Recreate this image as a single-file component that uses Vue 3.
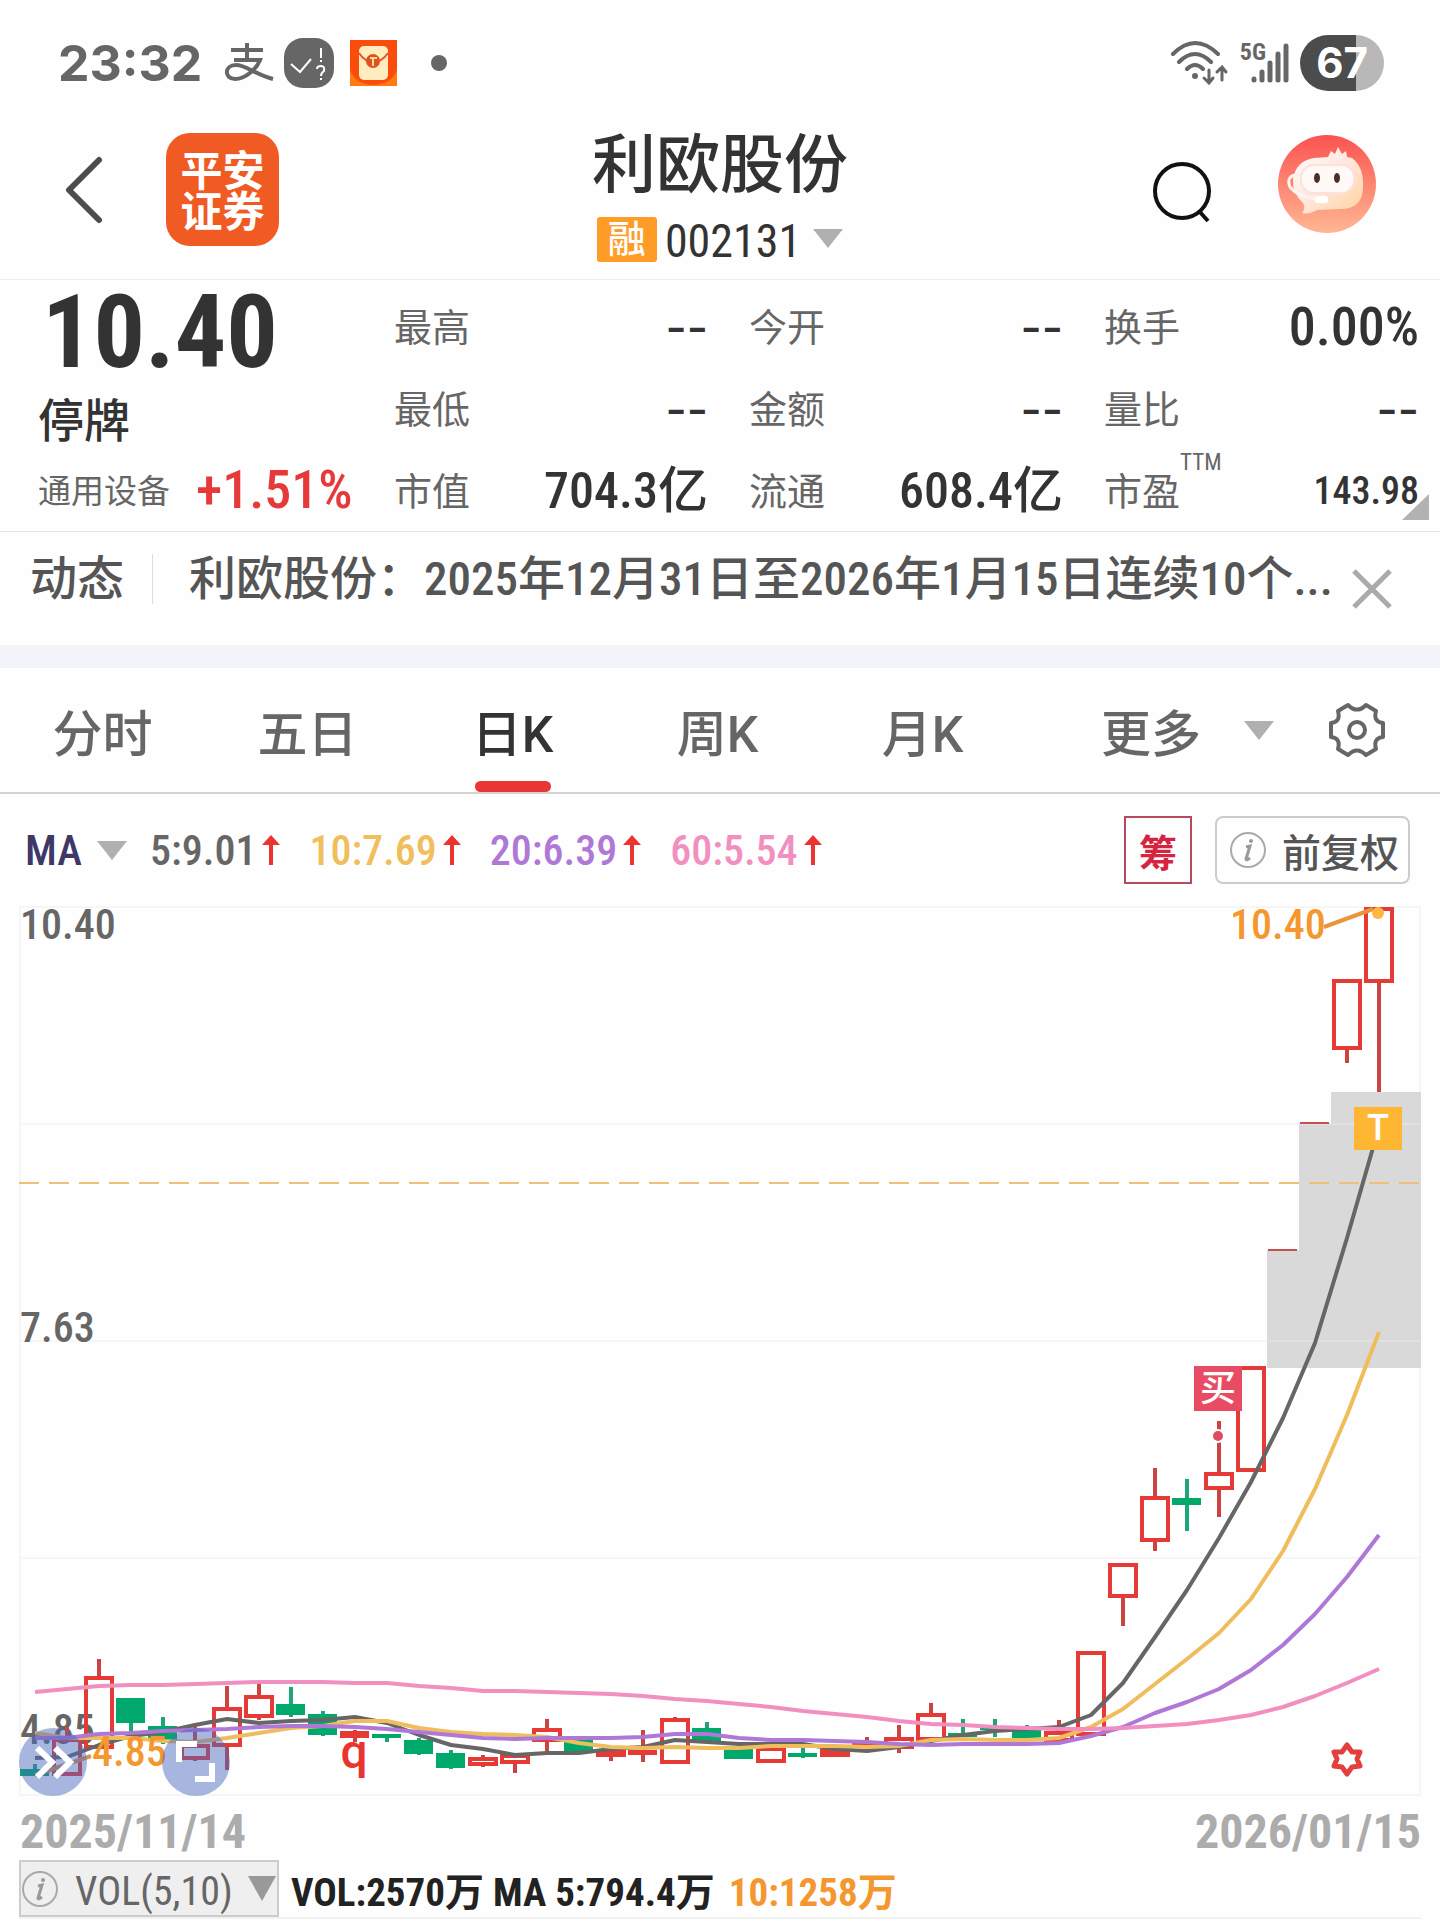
<script setup>
import { ref } from 'vue'

const tabs = ['分时', '五日', '日K', '周K', '月K']
const activeTab = ref('日K')
const indicator = ref('MA')
const volume = ref('VOL(5,10)')

const stats = [
  [['最高', '--'], ['最低', '--'], ['市值', '704.3亿']],
  [['今开', '--'], ['金额', '--'], ['流通', '608.4亿']],
  [['换手', '0.00%'], ['量比', '--'], ['市盈', '143.98', 'TTM']],
]

const averages = [
  { text: '5:9.01', tone: 'ma5' },
  { text: '10:7.69', tone: 'ma10' },
  { text: '20:6.39', tone: 'ma20' },
  { text: '60:5.54', tone: 'ma60' },
]

// One candle per trading day: [kind, wick top, body top, body bottom, wick bottom]
// u = hollow rise, s = solid rise, d = fall, l = limit-up line
const candles = [
  ['d', 1764, 1769, 1776, 1776], ['u', 1727, 1738, 1776, 1776], ['u', 1659, 1676, 1749, 1749],
  ['d', 1698, 1698, 1723, 1737], ['d', 1717, 1726, 1740, 1744], ['u', 1727, 1744, 1760, 1761],
  ['u', 1686, 1707, 1747, 1770], ['u', 1684, 1695, 1718, 1720], ['d', 1687, 1704, 1715, 1717],
  ['d', 1711, 1714, 1735, 1736], ['s', 1730, 1731, 1738, 1742], ['d', 1734, 1734, 1738, 1742],
  ['d', 1738, 1740, 1754, 1755], ['d', 1750, 1753, 1768, 1769], ['u', 1755, 1757, 1766, 1767],
  ['u', 1754, 1754, 1764, 1773], ['u', 1719, 1728, 1742, 1752], ['d', 1740, 1740, 1751, 1751],
  ['u', 1747, 1749, 1757, 1761], ['s', 1730, 1750, 1755, 1762], ['u', 1717, 1718, 1764, 1764],
  ['d', 1722, 1728, 1741, 1741], ['d', 1749, 1749, 1759, 1759], ['u', 1747, 1747, 1763, 1763],
  ['d', 1748, 1753, 1757, 1758], ['u', 1747, 1749, 1757, 1757], ['s', 1737, 1743, 1748, 1748],
  ['u', 1725, 1737, 1749, 1753], ['u', 1703, 1713, 1741, 1741], ['d', 1719, 1733, 1737, 1737],
  ['d', 1719, 1727, 1730, 1737], ['d', 1725, 1729, 1739, 1739], ['u', 1720, 1731, 1742, 1742],
  ['u', 1651, 1651, 1736, 1736], ['u', 1563, 1563, 1598, 1626], ['u', 1468, 1496, 1542, 1551],
  ['d', 1479, 1498, 1505, 1531], ['u', 1421, 1472, 1490, 1517], ['u', 1366, 1366, 1472, 1472],
  ['l', 1250, 1250, 1250, 1250], ['l', 1123, 1123, 1123, 1123], ['u', 979, 979, 1050, 1063],
  ['u', 907, 907, 983, 1092],
].map(([kind, high, top, bottom, low], i) => ({ kind, high, top, bottom, low, x: 35 + i * 32 }))

const series = {
  ma5: [1758, 1757, 1745, 1736, 1732, 1725, 1719, 1723, 1721, 1720, 1717, 1723, 1735, 1745, 1749, 1755, 1753, 1753, 1749, 1747, 1740, 1742, 1744, 1744, 1744, 1749, 1751, 1747, 1741, 1735, 1731, 1729, 1727, 1715, 1683, 1637, 1590, 1538, 1482, 1418, 1343, 1238, 1127],
  ma10: [1733, 1738, 1738, 1738, 1741, 1742, 1738, 1733, 1728, 1726, 1721, 1721, 1728, 1732, 1734, 1735, 1737, 1743, 1747, 1748, 1747, 1748, 1748, 1746, 1746, 1746, 1747, 1746, 1740, 1739, 1740, 1740, 1738, 1727, 1709, 1684, 1659, 1633, 1599, 1551, 1489, 1415, 1332],
  ma20: [1738, 1738, 1734, 1733, 1731, 1730, 1729, 1727, 1726, 1726, 1727, 1729, 1732, 1735, 1738, 1739, 1738, 1738, 1738, 1737, 1734, 1734, 1738, 1740, 1740, 1741, 1742, 1744, 1745, 1744, 1744, 1744, 1743, 1736, 1727, 1713, 1702, 1689, 1670, 1645, 1614, 1577, 1535],
  ma60: [1692, 1689, 1686, 1685, 1685, 1684, 1683, 1682, 1682, 1682, 1683, 1683, 1686, 1688, 1691, 1691, 1692, 1693, 1694, 1696, 1699, 1701, 1704, 1707, 1711, 1714, 1717, 1721, 1724, 1725, 1727, 1728, 1729, 1729, 1728, 1726, 1724, 1720, 1715, 1707, 1696, 1683, 1669],
}
const lines = ['ma5', 'ma10', 'ma20', 'ma60'].map((name) => ({
  name,
  points: series[name].map((y, i) => `${35 + i * 32},${y}`).join(' '),
}))
</script>

<template>
  <main class="screen">
    <div class="status">
      <time class="clock">23:32</time>
      <svg class="pay" width="50" height="40" viewBox="0 0 50 40" aria-hidden="true">
        <path d="M7 7H39M23 0V17M10 17H36C33 25 22 36 11 36C0 36 0 22 12 22C22 22 32 32 49 36" />
      </svg>
      <svg width="50" height="50" viewBox="0 0 50 50" aria-hidden="true">
        <rect width="50" height="50" rx="19" fill="#666" />
        <path d="M7 26L16 34L27 21" fill="none" stroke="#fff" stroke-width="2" />
        <path d="M37 10V20M37 22V24M33 31Q33 28 37 28Q41 28 40 33Q37 35 37 38M37 40V42" fill="none" stroke="#fff" stroke-width="2" />
      </svg>
      <svg width="47" height="46" viewBox="0 0 47 46" aria-hidden="true">
        <rect width="47" height="46" fill="#fb4c0c" />
        <path d="M0 30Q5 44 23 45Q42 44 47 30V46H0Z" fill="#ff7a12" />
        <rect x="9" y="6" width="29" height="34" rx="5" fill="#ffedbf" />
        <path d="M9 13Q15 22 23 22Q32 22 38 13" fill="none" stroke="#e0582a" stroke-width="2" />
        <circle cx="23" cy="21" r="7" fill="#e2511d" />
        <path d="M20 18H27M23 18V26" stroke="#ffdf9d" stroke-width="2" />
      </svg>
      <span class="dot"></span>
      <span class="spacer"></span>
      <svg width="60" height="46" viewBox="0 0 60 46" fill="none" stroke="#666" stroke-width="4" stroke-linecap="round" aria-hidden="true">
        <path d="M3 14Q25 -8 48 14M9 22Q25 6 41 22M17 29Q25 21 33 29" />
        <circle cx="25" cy="36" r="2" fill="#666" stroke-width="2" />
        <path d="M39 30V43M34 38L39 43L43 38M52 40V27M47 32L52 27L56 32" stroke-width="3" />
      </svg>
      <div class="signal">
        <span>5G</span>
        <svg width="40" height="42" viewBox="0 0 40 42" stroke="#666" stroke-width="5" stroke-linecap="round" aria-hidden="true">
          <path d="M4 37V38M12 30V38M20 21V38M28 12V38M36 4V38" />
        </svg>
      </div>
      <span class="battery">67</span>
    </div>

    <header class="head">
      <div class="side">
        <button class="back" aria-label="返回">
          <svg width="38" height="68" viewBox="0 0 38 68"><path d="M34 4L4 34L34 64" /></svg>
        </button>
        <a class="logo" href="#"><span>平安</span><span>证券</span></a>
      </div>
      <div class="name">
        <h1>利欧股份</h1>
        <button class="code">
          <span class="badge">融</span>002131
          <svg width="30" height="19" viewBox="0 0 30 19"><path d="M0 0H30L15 19Z" fill="#b0b0b0" /></svg>
        </button>
      </div>
      <div class="side end">
        <button aria-label="搜索">
          <svg width="60" height="66" viewBox="0 0 60 66" fill="none" stroke="#111" stroke-width="4">
            <circle cx="30" cy="34" r="27" /><path d="M47 54L56 64" />
          </svg>
        </button>
        <button class="avatar" aria-label="智能客服">
          <svg width="99" height="99" viewBox="0 0 99 99">
            <defs>
              <linearGradient id="sky" x1="0" y1="0" x2="0" y2="1"><stop offset="0" stop-color="#fb5350" /><stop offset="1" stop-color="#ffb794" /></linearGradient>
              <linearGradient id="skin" x1="0" y1="0" x2="1" y2="1"><stop offset="0" stop-color="#fff" /><stop offset=".5" stop-color="#ffe6de" /><stop offset="1" stop-color="#ffd39a" /></linearGradient>
            </defs>
            <circle cx="49" cy="49" r="49" fill="url(#sky)" />
            <path d="M50 22L53 16L57 19L60 12L64 19L68 16L69 22L74 23Q86 32 85 52Q85 74 62 74L39 75Q30 80 24 78Q28 73 25 68Q14 58 15 44Q18 26 36 23Z" fill="url(#skin)" />
            <rect x="23" y="30" width="53" height="28" rx="13" fill="#fffaf8" stroke="#ffe1db" stroke-width="2" />
            <ellipse cx="39" cy="43" rx="3" ry="5" fill="#4a3029" /><ellipse cx="59" cy="43" rx="3" ry="5" fill="#4a3029" />
            <path d="M17 40Q8 42 12 52Q20 62 40 64" fill="none" stroke="#fff3ef" stroke-width="3" />
            <rect x="37" y="61" width="13" height="7" rx="3" fill="#fff" />
          </svg>
        </button>
      </div>
    </header>

    <section class="quote">
      <div class="last">
        <strong class="price">10.40</strong>
        <span class="halt">停牌</span>
        <a class="sector" href="#"><span>通用设备</span><b>+1.51%</b></a>
      </div>
      <dl v-for="(column, c) in stats" :key="c">
        <div v-for="[label, value, note] in column" :key="label">
          <dt>{{ label }}<sup v-if="note">{{ note }}</sup></dt>
          <dd :class="{ small: note, none: value === '--', rate: value.endsWith('%') }">{{ value }}</dd>
        </div>
      </dl>
      <svg class="corner" width="27" height="26" viewBox="0 0 27 26" aria-hidden="true"><path d="M27 0V26H0Z" fill="#b2b2b2" /></svg>
    </section>

    <section class="news">
      <span class="kind">动态</span>
      <a href="#">利欧股份：2025年12月31日至2026年1月15日连续10个...</a>
      <button aria-label="关闭">
        <svg width="40" height="40" viewBox="0 0 40 40"><path d="M2 2L38 38M38 2L2 38" stroke="#aaa" stroke-width="5" /></svg>
      </button>
    </section>

    <nav class="tabs">
      <button v-for="tab in tabs" :key="tab" class="tab" :class="{ on: tab === activeTab }" @click="activeTab = tab">{{ tab }}</button>
      <button class="tab more">
        更多
        <svg width="30" height="19" viewBox="0 0 30 19"><path d="M0 0H30L15 19Z" fill="#b0b0b0" /></svg>
      </button>
      <button class="gear" aria-label="设置">
        <svg width="56" height="56" viewBox="-28 -28 56 56" fill="none" stroke="#666" stroke-width="4" stroke-linejoin="round">
          <path d="M-9 -25Q0 -16 9 -25L19 -19Q16 -8 26 -7V7Q16 8 19 19L9 25Q0 16 -9 25L-19 19Q-16 8 -26 7V-7Q-16 -8 -19 -19Z" />
          <circle r="8" />
        </svg>
      </button>
    </nav>

    <section class="averages">
      <label class="pick">
        <select v-model="indicator" aria-label="主图指标"><option>MA</option></select>
        <svg width="30" height="19" viewBox="0 0 30 19"><path d="M0 0H30L15 19Z" fill="#b0b0b0" /></svg>
      </label>
      <span v-for="item in averages" :key="item.tone" class="average" :class="item.tone">
        {{ item.text }}
        <svg width="18" height="30" viewBox="0 0 18 30"><path d="M9 0L18 10H11V30H7V10H0Z" fill="#eb3330" /></svg>
      </span>
      <span class="spacer"></span>
      <button class="chips">筹</button>
      <button class="adjust">
        <svg width="38" height="38" viewBox="0 0 38 38" aria-hidden="true">
          <circle cx="19" cy="19" r="17" fill="none" stroke="#aaa" stroke-width="2" />
          <path d="M17 16L21 15L17 28Q17 30 21 27" fill="none" stroke="#999" stroke-width="3" /><circle cx="22" cy="10" r="2" fill="#999" />
        </svg>
        前复权
      </button>
    </section>

    <section class="chart">
      <svg class="plot" viewBox="0 894 1440 910" role="img" aria-label="日K线图">
        <path class="grid" d="M20 907H1420V1795H20ZM20 1124H1420M20 1341H1420M20 1558H1420" />
        <path d="M1267 1368V1250H1299V1123H1331V1092H1421V1368Z" fill="#d9d9d9" />
        <path d="M1299 1124H1420M1267 1341H1420" stroke="#e1e1e1" stroke-width="2" />
        <path d="M19 1183H1420" stroke="#f0c07a" stroke-width="2" stroke-dasharray="20 10" />
        <text class="axis" x="20" y="939">10.40</text>
        <text class="axis" x="20" y="1342">7.63</text>
        <text class="axis" x="20" y="1744">4.85</text>
        <g v-for="c in candles" :key="c.x" :class="c.kind">
          <path v-if="c.kind === 'l'" :d="`M${c.x - 15} ${c.top}H${c.x + 14}`" stroke="#c7504d" stroke-width="2" />
          <template v-else>
            <path class="wick" :d="`M${c.x} ${c.high}V${c.top}M${c.x} ${c.bottom}V${c.low}`" />
            <rect v-if="c.kind === 'u'" :x="c.x - 13" :y="c.top + 2" width="26" :height="c.bottom - c.top - 4" />
            <rect v-else :x="c.x - 15" :y="c.top" width="29" :height="c.bottom - c.top" />
          </template>
        </g>
        <polyline v-for="line in lines" :key="line.name" class="line" :class="line.name" :points="line.points" />
        <path d="M1324 927L1373 909" stroke="#ea9638" stroke-width="4" />
        <circle cx="1378" cy="913" r="6" fill="#ffb743" />
        <text class="mark" x="1230" y="939">10.40</text>
        <path d="M35 1775L91 1756" stroke="#d99352" stroke-width="4" />
        <text class="mark" x="92" y="1766">4.85</text>
        <rect x="1354" y="1107" width="48" height="43" fill="#ffb733" />
        <text class="flag wide" x="1378" y="1140">T</text>
        <rect x="1194" y="1366" width="48" height="45" fill="#e84c64" />
        <text class="flag" x="1218" y="1401">买</text>
        <circle cx="1218" cy="1436" r="6" fill="#dd4c62" stroke="#fff" stroke-width="2" />
        <text class="event" x="354" y="1768">q</text>
        <path d="M1347 1745L1352 1752L1360 1752L1357 1759L1360 1766L1352 1767L1347 1774L1342 1767L1334 1766L1337 1759L1334 1752L1342 1752Z" fill="none" stroke="#e33f3d" stroke-width="5" stroke-linejoin="round" />
      </svg>
      <div class="tools">
        <button aria-label="展开">
          <svg width="68" height="68" viewBox="0 0 68 68"><path d="M18 20L33 34L18 49M36 20L51 34L36 49" fill="none" stroke="#fff" stroke-width="6" /></svg>
        </button>
        <button aria-label="全屏">
          <svg width="68" height="68" viewBox="0 0 68 68"><path d="M17 34V16H35M50 35V51H33" fill="none" stroke="#fff" stroke-width="6" /></svg>
        </button>
      </div>
    </section>

    <div class="dates"><time>2025/11/14</time><time>2026/01/15</time></div>

    <section class="volume">
      <label class="volpick">
        <svg width="38" height="38" viewBox="0 0 38 38" aria-hidden="true">
          <circle cx="19" cy="19" r="17" fill="none" stroke="#aaa" stroke-width="2" />
          <path d="M17 16L21 15L17 28Q17 30 21 27" fill="none" stroke="#999" stroke-width="3" /><circle cx="22" cy="10" r="2" fill="#999" />
        </svg>
        <select v-model="volume" aria-label="副图指标"><option>VOL(5,10)</option></select>
        <svg width="28" height="25" viewBox="0 0 28 25"><path d="M0 0H28L14 25Z" fill="#999" /></svg>
      </label>
      <span>VOL:2570万 MA 5:794.4万</span>
      <span class="ten">10:1258万</span>
    </section>
  </main>
</template>

<style>
body { margin: 0; background: #fefefe; }
</style>

<style scoped>
.screen { font-family: "Roboto Condensed", "Noto Sans CJK SC", sans-serif; color: #333; background: #fefefe; overflow: hidden; }
button, select { font: inherit; color: inherit; background: none; border: 0; padding: 0; margin: 0; appearance: none; }
button { display: flex; align-items: center; cursor: pointer; }
a { color: inherit; text-decoration: none; }
svg { display: block; flex: none; }
.spacer { flex: 1; }

.status { display: flex; align-items: center; height: 94px; padding: 16px 56px 0 58px; color: #666; }
.clock { font: 700 50px/60px Inter, sans-serif; margin-right: 22px; }
.pay { fill: none; stroke: #666; stroke-width: 4; margin-right: 10px; }
.status > svg + svg { margin-right: 16px; }
.dot { width: 16px; height: 16px; border-radius: 50%; background: #666; margin-left: 18px; }
.signal { display: flex; margin: 0 10px 0 10px; font: 700 24px/28px "Roboto Condensed", sans-serif; }
.signal span { margin: -4px -16px 0 0; }
.battery { width: 84px; height: 56px; border-radius: 28px; background: linear-gradient(90deg, #4c4c4c 67%, #b8b8b8 67%); color: #fff; font: 700 42px/56px Inter, sans-serif; text-align: center; }

.head { display: grid; grid-template-columns: 1fr auto 1fr; border-bottom: 1px solid #ececec; height: 169px; }
.side { display: flex; align-items: center; padding: 0 63px 10px 65px; gap: 63px; }
.end { justify-content: flex-end; gap: 66px; }
.back path { fill: none; stroke: #4c4c4c; stroke-width: 6; stroke-linecap: round; stroke-linejoin: round; }
.logo { display: flex; flex-direction: column; width: 113px; height: 99px; padding: 14px 0 0; border-radius: 24px; background: #f05a23; color: #fff; font: 700 42px/41px "Noto Sans CJK SC", sans-serif; text-align: center; }
.avatar { margin-top: -10px; }
.name { display: flex; flex-direction: column; align-items: center; padding-top: 24px; }
h1 { margin: 0; font-size: 64px; line-height: 64px; font-weight: 500; }
.code { height: 56px; margin-top: 15px; font-size: 46px; gap: 8px; }
.code svg { margin: 0 0 6px 4px; }
.badge { width: 60px; height: 45px; margin-bottom: 4px; border-radius: 3px; background: #ff9c27; color: #fff; font-size: 38px; font-weight: 500; line-height: 44px; }

.quote { position: relative; display: grid; grid-template-columns: 315fr 314fr 314fr 315fr; column-gap: 41px; padding: 0 21px 0 38px; height: 251px; border-bottom: 1px solid #e6e6e6; white-space: nowrap; }
.last { display: flex; flex-direction: column; }
.price { padding-left: 4px; font-size: 102px; line-height: 104px; }
.halt { font-size: 46px; line-height: 74px; font-weight: 500; }
.sector { display: flex; align-items: center; gap: 26px; font-size: 33px; line-height: 60px; color: #666; }
.sector span { padding-top: 4px; }
.sector b { font-size: 54px; font-weight: 500; color: #e63a3a; }
dl { margin: 6px 0 0; }
dl div { display: flex; justify-content: space-between; align-items: center; height: 82px; }
dt { position: relative; padding-bottom: 6px; font-size: 38px; color: #666; font-weight: 400; }
dt sup { position: absolute; left: 100%; top: -12px; font-size: 23px; line-height: 28px; }
dd { margin: 0; font-size: 50px; line-height: 60px; font-weight: 500; }
dd.small { font-size: 38px; font-weight: 500; }
dd.rate { font-size: 54px; }
dd.none { font-family: Inter, sans-serif; font-size: 46px; }
.corner { position: absolute; right: 11px; bottom: 11px; }

.news { display: flex; align-items: center; height: 93px; padding: 0 48px 20px 30px; border-bottom: 23px solid #f2f4f9; font-size: 47px; font-weight: 500; color: #555; white-space: nowrap; }
.kind { padding-right: 28px; line-height: 50px; border-right: 1px solid #ddd; }
.news a { flex: 1; padding-left: 36px; line-height: 60px; }
.news button { margin-top: 20px; }

.tabs { display: grid; grid-template-columns: repeat(5, minmax(0, 205fr)) minmax(0, 272fr) minmax(0, 143fr); height: 124px; border-bottom: 2px solid #d2d4d4; font-family: Roboto, "Noto Sans CJK SC", sans-serif; font-size: 50px; font-weight: 500; color: #666; }
.tab { position: relative; justify-content: center; }
.tab.on { color: #333; }
.tab.on::after { content: ""; position: absolute; bottom: 0; left: 50%; width: 76px; margin-left: -38px; height: 11px; border-radius: 6px; background: #e93534; }
.more { justify-content: flex-start; padding-left: 76px; gap: 43px; }
.gear { padding-left: 32px; }

.averages { display: flex; align-items: center; height: 88px; padding: 12px 30px 0 25px; font-size: 42px; font-weight: 500; }
.pick { display: flex; align-items: center; gap: 15px; color: #3d3868; margin-right: 23px; }
.average { display: flex; align-items: center; gap: 6px; margin-right: 29px; }
.average.ma5 { color: #666; }
.average.ma10 { color: #f0be5a; }
.average.ma20 { color: #af78d7; }
.average.ma60 { color: #f08fc0; }
.chips { width: 68px; height: 68px; justify-content: center; border: 2px solid #b84a60; color: #d42440; font-size: 38px; font-weight: 700; }
.adjust { height: 68px; margin-left: 23px; padding: 0 9px 0 12px; gap: 15px; border: 2px solid #ccc; border-radius: 8px; color: #555; font-size: 39px; }

.chart { position: relative; }
.plot { width: 100%; height: auto; }
.grid { fill: none; stroke: #f6f6f6; stroke-width: 2; }
.axis { font-size: 42px; font-weight: 500; fill: #666; }
.mark { font-size: 42px; font-weight: 500; fill: #f5972f; }
.flag { font-size: 36px; font-weight: 500; fill: #fff; text-anchor: middle; }
.wide { font-family: Roboto, sans-serif; }
.event { font: 500 48px Roboto, sans-serif; fill: #eb3330; text-anchor: middle; }
.u rect { fill: none; stroke: #e63a37; stroke-width: 4; }
.s rect { fill: #e63a37; }
.d rect { fill: #00a86b; }
.u .wick, .s .wick { stroke: #cc4442; stroke-width: 4; }
.d .wick { stroke: #1ca577; stroke-width: 4; }
.line { fill: none; stroke-width: 4; stroke-linejoin: round; }
.line.ma5 { stroke: #666; }
.line.ma10 { stroke: #efbd5c; }
.line.ma20 { stroke: #af78d7; }
.line.ma60 { stroke: #f08fc0; }
.tools { position: absolute; left: 19px; bottom: 8px; display: flex; gap: 75px; }
.tools button { border-radius: 50%; background: rgba(73, 105, 190, 0.48); }

.dates { display: flex; justify-content: space-between; padding: 0 19px 0 20px; font-size: 48px; line-height: 56px; font-weight: 700; color: #acacac; }
.volume { display: flex; align-items: center; margin: 0 19px; border-bottom: 2px solid #f2f2f2; font-size: 39px; font-weight: 700; color: #222; white-space: nowrap; }
.volpick { display: flex; align-items: center; height: 53px; width: 256px; margin-right: 12px; border: 2px solid #ccc; background: #efefef; color: #666; font-size: 40px; font-weight: 400; }
.volpick select { margin: 0 15px 0 16px; padding-top: 5px; }
.ten { margin-left: 14px; color: #f5972f; }
</style>
